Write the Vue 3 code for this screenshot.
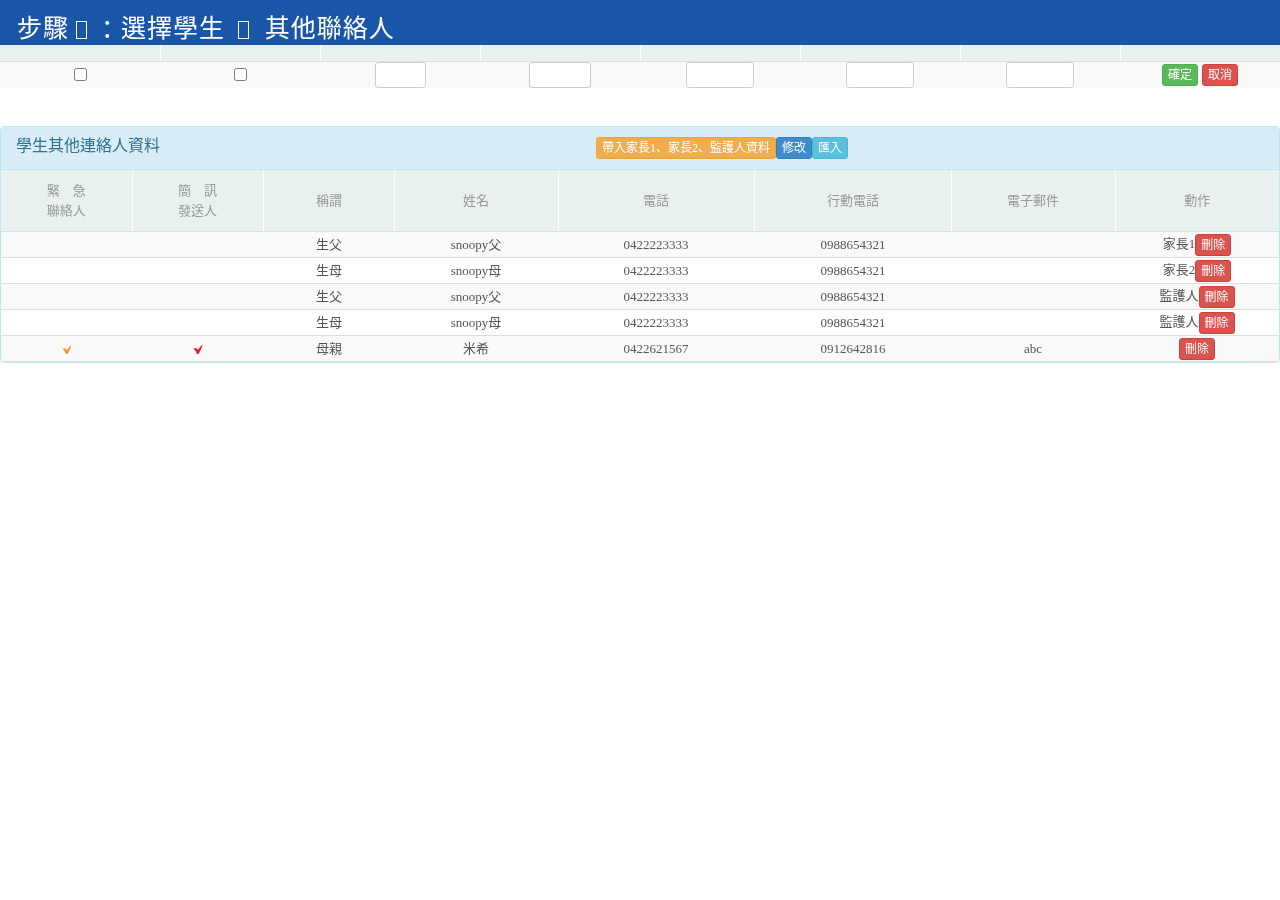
<script setup>
const contacts = [
  { title: '生父', name: 'snoopy父', phone: '0422223333', mobile: '0988654321', email: '', source: '家長1' },
  { title: '生母', name: 'snoopy母', phone: '0422223333', mobile: '0988654321', email: '', source: '家長2' },
  { title: '生父', name: 'snoopy父', phone: '0422223333', mobile: '0988654321', email: '', source: '監護人' },
  { title: '生母', name: 'snoopy母', phone: '0422223333', mobile: '0988654321', email: '', source: '監護人' },
  { title: '母親', name: '米希', phone: '0422621567', mobile: '0912642816', email: 'abc', source: '', emergency: true, sms: true },
]
const widths = [131, 131, 131, 164, 196, 197, 164, 164]
</script>

<template>
  <div class="page">
    <h1 class="step-title">步驟 <span class="tofu first"></span> <span class="colon">：</span>選擇學生 <span class="tofu second"></span> 其他聯絡人</h1>

    <table class="table edit-table">
      <thead>
        <tr>
          <th v-for="n in 8" :key="n"></th>
        </tr>
      </thead>
      <tbody>
        <tr>
          <td><input type="checkbox" /></td>
          <td><input type="checkbox" /></td>
          <td><input class="field w51" type="text" /></td>
          <td><input class="field w62" type="text" /></td>
          <td><input class="field w68" type="text" /></td>
          <td><input class="field w68" type="text" /></td>
          <td><input class="field w68" type="text" /></td>
          <td class="actions">
            <button class="btn green">確定</button>
            <button class="btn red">取消</button>
          </td>
        </tr>
      </tbody>
    </table>

    <div class="panel">
      <div class="panel-heading">
        <div class="panel-title">學生其他連絡人資料</div>
        <div class="panel-buttons">
          <button class="btn orange">帶入家長1、家長2、監護人資料</button><button class="btn blue">修改</button><button class="btn cyan">匯入</button>
        </div>
      </div>
      <table class="table list-table">
        <colgroup>
          <col v-for="(w, i) in widths" :key="i" :style="{ width: w + 'px' }" />
        </colgroup>
        <thead>
          <tr>
            <th>緊　急<br />聯絡人</th>
            <th>簡　訊<br />發送人</th>
            <th>稱謂</th>
            <th>姓名</th>
            <th>電話</th>
            <th>行動電話</th>
            <th>電子郵件</th>
            <th>動作</th>
          </tr>
        </thead>
        <tbody>
          <tr v-for="(c, i) in contacts" :key="i">
            <td>
              <svg v-if="c.emergency" class="check" width="14" height="14" viewBox="0 0 14 14">
                <path d="M2.4 5.8 L5 5.2 L7 7 C8.2 5.2 9.8 3.4 11.5 2 C10.6 5 9.2 8.2 7.6 11 L6 11 C5.2 9 3.9 7.2 2.4 5.8 Z" fill="#f7931e" />
              </svg>
            </td>
            <td>
              <svg v-if="c.sms" class="check" width="14" height="14" viewBox="0 0 14 14">
                <path d="M2.4 5.6 L5 5 L7 6.8 C8.2 5 9.8 3.2 11.7 1.8 C10.8 4.8 9.2 8.2 7.6 11 L6 11 C5.2 9 3.9 7 2.4 5.6 Z" fill="#ed1c2e" />
              </svg>
            </td>
            <td>{{ c.title }}</td>
            <td>{{ c.name }}</td>
            <td>{{ c.phone }}</td>
            <td>{{ c.mobile }}</td>
            <td>{{ c.email }}</td>
            <td>{{ c.source }}<button class="btn red">刪除</button></td>
          </tr>
        </tbody>
      </table>
    </div>
  </div>
</template>

<style scoped>
.page {
  font-family: "Liberation Serif", "Noto Sans CJK KR", serif;
  font-size: 13px;
  color: #555;
  will-change: transform;
}

.step-title {
  margin: 0;
  height: 45px;
  padding: 9px 0 0 17px;
  box-sizing: border-box;
  background: #1a56a7;
  color: #fff;
  font-family: "Liberation Sans", "Noto Sans CJK KR", sans-serif;
  font-size: 25px;
  font-weight: 400;
  line-height: 38px;
  letter-spacing: 1px;
  white-space: nowrap;
  overflow: hidden;
}

.colon {
  font-family: "Liberation Sans", "Noto Sans CJK SC", sans-serif;
  margin-left: 6px;
  letter-spacing: -5px;
}

.tofu {
  display: inline-block;
  width: 11px;
  height: 18px;
  border: 1px solid #fff;
  box-sizing: border-box;
  vertical-align: -2px;
}

.tofu.first {
  margin: 0 0 0 -1px;
}

.tofu.second {
  margin: 0 8px 0 5px;
}

.table {
  width: 100%;
  border-collapse: collapse;
  table-layout: fixed;
}

.table th {
  background: #e8f1f0;
  border-right: 1px solid #fff;
  border-bottom: 1px solid #ddd;
  padding: 0;
  font-weight: 400;
}

.table th:last-child {
  border-right: none;
}

.table td {
  padding: 0;
  text-align: center;
  vertical-align: middle;
}

.edit-table th {
  height: 16px;
}

.edit-table td {
  height: 26px;
  background: #f9f9f9;
}

.edit-table input[type="checkbox"] {
  display: inline-block;
  width: 13px;
  height: 13px;
  margin: 0 0 2px;
  vertical-align: middle;
}

.field {
  display: inline-block;
  height: 26px;
  box-sizing: border-box;
  padding: 0 4px;
  margin: 0;
  border: 1px solid #ccc;
  border-radius: 3px;
  background: #fff;
  vertical-align: middle;
}

.w51 { width: 51px; }
.w62 { width: 62px; }
.w68 { width: 68px; }

.actions .btn + .btn {
  margin-left: 4px;
}

.btn {
  display: inline-block;
  box-sizing: border-box;
  height: 22px;
  padding: 1px 5px;
  border: 1px solid transparent;
  border-radius: 3px;
  color: #fff;
  font-family: "Liberation Serif", "Noto Sans CJK KR", serif;
  font-size: 12px;
  line-height: 18px;
  vertical-align: middle;
  white-space: nowrap;
}

.green { background: #5cb85c; border-color: #4cae4c; }
.red { background: #d9534f; border-color: #d43f3a; }
.orange { background: #f0ad4e; border-color: #eea236; }
.blue { background: #428bca; border-color: #357ebd; }
.cyan { background: #5bc0de; border-color: #46b8da; }

.panel {
  margin-top: 38px;
  border: 1px solid #bce8f1;
  border-radius: 4px;
  background: #fff;
  overflow: hidden;
  box-shadow: 0 1px 1px rgba(0, 0, 0, 0.05);
}

.panel-heading {
  display: flex;
  height: 43px;
  box-sizing: border-box;
  padding: 10px 15px 0;
  background: #d9edf7;
  border-bottom: 1px solid #bce8f1;
}

.panel-title {
  width: 580px;
  color: #31708f;
  font-family: "Liberation Sans", "Noto Sans CJK KR", sans-serif;
  font-size: 16px;
  line-height: 18px;
}

.panel-buttons {
  display: flex;
  height: 22px;
}

.list-table th {
  height: 61px;
  color: #999;
  line-height: 20px;
  text-align: center;
  vertical-align: middle;
}

.list-table td {
  height: 25px;
  border-bottom: 1px solid #ddd;
  line-height: 18px;
}

.list-table th:nth-child(3),
.list-table td:nth-child(3),
.list-table th:nth-child(6),
.list-table td:nth-child(6) {
  padding-left: 1px;
}

.list-table tbody tr:nth-child(odd) td {
  background: #f9f9f9;
}

.check {
  display: inline-block;
  vertical-align: middle;
}
</style>
